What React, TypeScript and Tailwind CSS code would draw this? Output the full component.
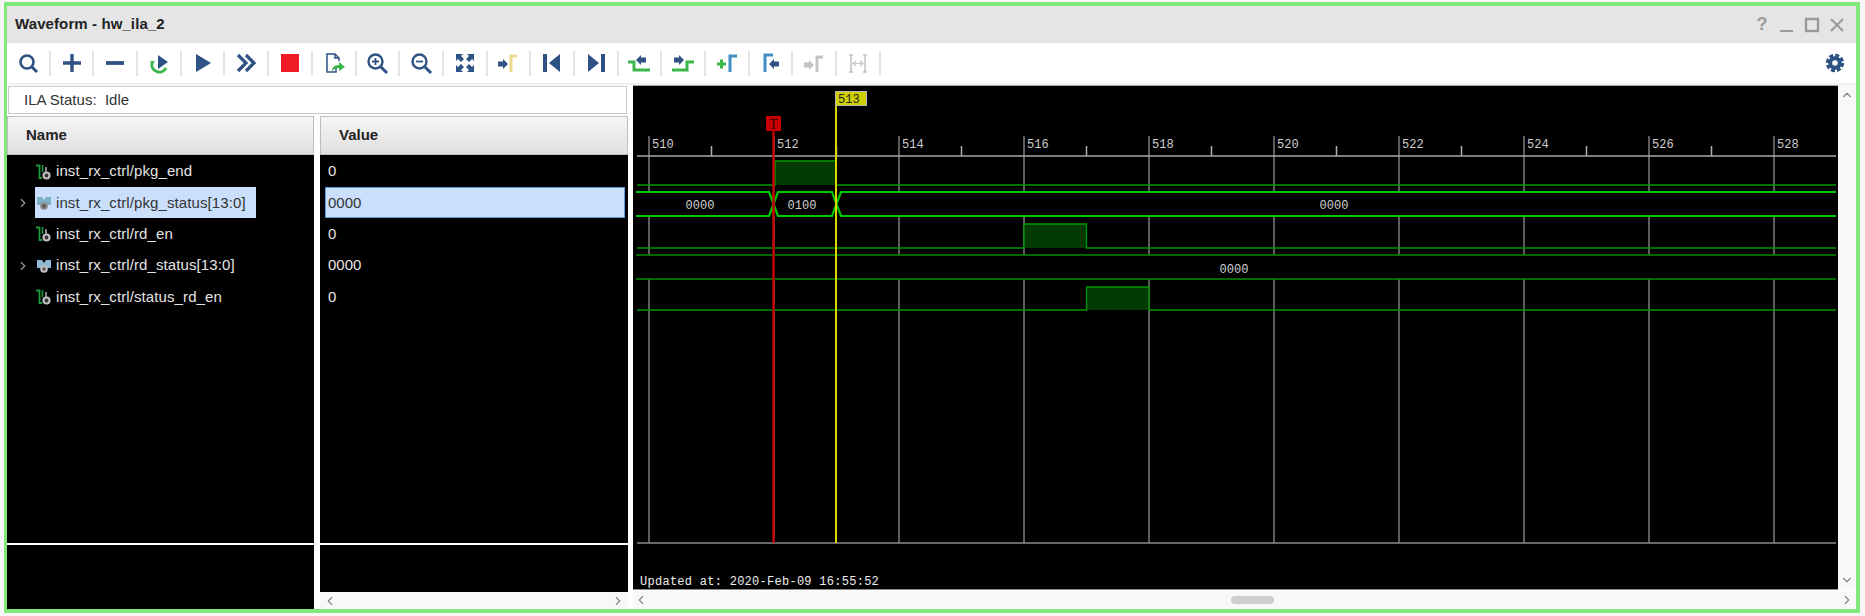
import { ChevronDown, ChevronLeft, ChevronRight, ChevronUp } from 'lucide-react';
import type { ReactNode } from 'react';

const NAVY = '#2f5285';
const GREEN = '#3cb54a';
const BLUE = '#3f8fc4';
const GRAY = '#c4c4c4';

function Ico({ children }: { children: ReactNode }) {
  return (
    <svg viewBox="0 0 24 24" className="h-6 w-6" fill="none">
      {children}
    </svg>
  );
}

const Arrow = ({ x, y, color, left }: { x: number; y: number; color: string; left?: boolean }) => (
  <path
    d={
      left
        ? `M${x} ${y}l5 -5v2.5h5v5h-5v2.5z`
        : `M${x} ${y - 2.5}h5v-2.5l5 5l-5 5v-2.5h-5z`
    }
    fill={color}
  />
);

const toolbarIcons: ReactNode[] = [
  <Ico>
    <circle cx="11" cy="11" r="6.5" stroke={NAVY} strokeWidth="2.6" />
    <path d="M16 16l5 5" stroke={NAVY} strokeWidth="3" />
  </Ico>,
  <Ico>
    <path d="M12 3v18M3 12h18" stroke={NAVY} strokeWidth="3.4" />
  </Ico>,
  <Ico>
    <path d="M3 12h18" stroke={NAVY} strokeWidth="3.8" />
  </Ico>,
  <Ico>
    <path d="M5 12a7.5 7.5 0 0 0 14 5" stroke={GREEN} strokeWidth="3" />
    <path d="M3 10h5l-2.500 4z" fill={GREEN} />
    <path d="M11 4l10 7l-10 7z" fill={NAVY} />
  </Ico>,
  <Ico>
    <path d="M5 3l15 9l-15 9z" fill={NAVY} />
  </Ico>,
  <Ico>
    <path d="M4 4l8 8l-8 8M12 4l8 8l-8 8" stroke={NAVY} strokeWidth="3.2" />
  </Ico>,
  <svg viewBox="0 0 24 24" className="h-6 w-6">
    <rect x="3" y="3" width="18" height="18" fill="#ee1c25" />
  </svg>,
  <Ico>
    <path d="M14 16v5H5V3h8l4 4v3M13 3v4h4" stroke={NAVY} strokeWidth="1.5" />
    <path d="M10 20c0-4 3-6 7-6v-3l6 5l-6 4v-3c-3 0-5 1-7 3z" fill={GREEN} />
  </Ico>,
  <Ico>
    <circle cx="10.500" cy="10.500" r="7" stroke={NAVY} strokeWidth="2.4" />
    <path d="M16 16l6 6" stroke={NAVY} strokeWidth="3" />
    <path d="M10.500 7v7M7 10.500h7" stroke={NAVY} strokeWidth="1.8" />
  </Ico>,
  <Ico>
    <circle cx="10.500" cy="10.500" r="7" stroke={NAVY} strokeWidth="2.4" />
    <path d="M16 16l6 6" stroke={NAVY} strokeWidth="3" />
    <path d="M7 10.500h7" stroke={NAVY} strokeWidth="1.8" />
  </Ico>,
  <Ico>
    <path
      d="M3 3h7l-2 2l3 3l-3 3l-3-3l-2 2zM21 3v7l-2-2l-3 3l-3-3l3-3l-2-2zM3 21v-7l2 2l3-3l3 3l-3 3l2 2zM21 21h-7l2-2l-3-3l3-3l3 3l2-2z"
      fill={NAVY}
    />
  </Ico>,
  <Ico>
    <Arrow x={2} y={13} color={NAVY} />
    <path d="M15 21V5h6" stroke="#ecd98a" strokeWidth="3" />
  </Ico>,
  <Ico>
    <path d="M5 3v18" stroke={NAVY} strokeWidth="4" />
    <path d="M20 3v18l-11-9z" fill={NAVY} />
  </Ico>,
  <Ico>
    <path d="M19 3v18" stroke={NAVY} strokeWidth="4" />
    <path d="M4 3v18l11-9z" fill={NAVY} />
  </Ico>,
  <Ico>
    <path d="M1 11h6v8h16" stroke={GREEN} strokeWidth="3" />
    <Arrow x={9} y={9} color={NAVY} left />
  </Ico>,
  <Ico>
    <path d="M1 19h15v-8h7" stroke={GREEN} strokeWidth="3" />
    <Arrow x={3} y={9} color={NAVY} />
  </Ico>,
  <Ico>
    <path d="M2 13h9M6.500 8.500v9" stroke={GREEN} strokeWidth="3" />
    <path d="M15 21V5h7" stroke={BLUE} strokeWidth="3" />
  </Ico>,
  <Ico>
    <path d="M6 21V4h8" stroke={BLUE} strokeWidth="3" />
    <Arrow x={10} y={13} color={NAVY} left />
  </Ico>,
  <Ico>
    <Arrow x={2} y={14} color={GRAY} />
    <path d="M15 21V6h6" stroke={GRAY} strokeWidth="3" />
  </Ico>,
  <Ico>
    <path d="M5 4v17h0M19 4v17M3 4h4M3 21h4M17 4h4M17 21h4" stroke={GRAY} strokeWidth="1.6" />
    <path d="M7 12.500h10M10 10l-3 2.500l3 2.500M14 10l3 2.500l-3 2.500" stroke={GRAY} strokeWidth="1.2" />
  </Ico>,
];

function Gear() {
  return (
    <svg viewBox="0 0 20 20" className="h-5 w-5" fill="none">
      <circle cx="10" cy="10" r="7.500" stroke={NAVY} strokeWidth="3.400" strokeDasharray="3.890 1.999" />
      <circle cx="10" cy="10" r="6.800" fill={NAVY} />
      <circle cx="10" cy="10" r="2.800" fill="#fff" />
    </svg>
  );
}

function ScalarIcon() {
  return (
    <svg viewBox="0 0 16 16" className="h-4 w-4 shrink-0" fill="none">
      <path d="M0 1.500h3.500V14H6" stroke="#1f9a3c" strokeWidth="1.800" />
      <path d="M6.500 1v7" stroke="#1f9a3c" strokeWidth="1.500" />
      <circle cx="10.500" cy="11.500" r="3" stroke="#bdbdbd" strokeWidth="2.200" fill="#333" />
      <path d="M10 3v5" stroke="#bdbdbd" strokeWidth="1.400" />
    </svg>
  );
}

function BusIcon({ selected }: { selected?: boolean }) {
  return (
    <svg viewBox="0 0 16 16" className="h-4 w-4 shrink-0" fill="none">
      <path d="M1 2h5l2 3l2-3h5v8h-4l-3-2l-3 2H1z" fill={selected ? '#7fb0c8' : '#8fb8d4'} />
      <circle cx="8" cy="11" r="2.800" stroke={selected ? '#8a8a8a' : '#c0c0c0'} strokeWidth="2" fill="#555" />
    </svg>
  );
}

const signals = [
  { name: 'inst_rx_ctrl/pkg_end', value: '0' },
  { name: 'inst_rx_ctrl/pkg_status[13:0]', value: '0000', bus: true, selected: true },
  { name: 'inst_rx_ctrl/rd_en', value: '0' },
  { name: 'inst_rx_ctrl/rd_status[13:0]', value: '0000', bus: true },
  { name: 'inst_rx_ctrl/status_rd_en', value: '0' },
];

const majorTicks = [510, 512, 514, 516, 518, 520, 522, 524, 526, 528];
const X0 = 649;

function Wave() {
  const monoFont = { fontFamily: '"Liberation Mono", monospace' };
  return (
    <svg viewBox="633 85 1205 505" className="block h-full w-full" style={monoFont}>
      <path d="M633 85.500H1838" stroke="#a8a8a8" />
      <path d="M633 589.500H1838" stroke="#8a8a8a" />
      {/* ruler */}
      {majorTicks.map((t, i) => {
        const x = X0 + i * 125;
        return (
          <g key={t}>
            <path d={`M${x} 136V543`} stroke="#7d7d7d" strokeWidth="1.500" />
            <text x={x + 3} y="148" fill="#cfcfcf" fontSize="12">
              {t}
            </text>
            {i < 9 && <path d={`M${x + 62.5} 146V156`} stroke="#b0b0b0" strokeWidth="1.500" />}
          </g>
        );
      })}
      <path d="M637 156H1836" stroke="#a8a8a8" strokeWidth="1.500" />
      <path d="M637 543H1836" stroke="#8a8a8a" strokeWidth="1.500" />

      {/* pkg_end */}
      <rect x="775" y="161" width="61" height="24" fill="#033a03" />
      <path d="M637 185H775V161H836V185H1836" stroke="#009800" strokeWidth="1.300" fill="none" />

      {/* pkg_status, selected */}
      <rect x="636" y="192" width="1200" height="24" fill="#000" />
      <path
        d="M636 192H769L778 216H832L841 192H1836M636 216H769L778 192H832L841 216H1836"
        stroke="#00c800"
        strokeWidth="2.200"
        fill="none"
      />
      <text x="700" y="209" fill="#d0d0d0" fontSize="12" textAnchor="middle">0000</text>
      <text x="802" y="209" fill="#d0d0d0" fontSize="12" textAnchor="middle">0100</text>
      <text x="1334" y="209" fill="#d0d0d0" fontSize="12" textAnchor="middle">0000</text>

      {/* rd_en */}
      <rect x="1024" y="224" width="62.500" height="24" fill="#033a03" />
      <path d="M637 248H1024V224H1086.500V248H1836" stroke="#009800" strokeWidth="1.300" fill="none" />

      {/* rd_status */}
      <rect x="636" y="255" width="1200" height="24" fill="#000" />
      <path d="M636 255H1836M636 279H1836" stroke="#008c00" strokeWidth="1.500" fill="none" />
      <text x="1234" y="273" fill="#d0d0d0" fontSize="12" textAnchor="middle">0000</text>

      {/* status_rd_en */}
      <rect x="1086.500" y="287" width="62.500" height="23" fill="#033a03" />
      <path d="M637 310H1086.500V287H1149V310H1836" stroke="#009800" strokeWidth="1.300" fill="none" />

      {/* markers */}
      <path d="M773.500 130V543" stroke="#c00000" strokeWidth="2.500" />
      <rect x="766" y="116" width="15" height="15" fill="#c80000" />
      <text x="773.500" y="129" fill="#300000" fontSize="14" textAnchor="middle" fontFamily='"Liberation Serif", serif'>
        T
      </text>
      <path d="M836 104V543" stroke="#d8d800" strokeWidth="2" />
      <rect x="835.500" y="91.500" width="31" height="14" fill="#cfcf00" stroke="#b8b8b8" />
      <text x="838" y="103" fill="#222" fontSize="12">513</text>

      <text x="640" y="585" fill="#eeeeee" fontSize="12" letterSpacing="0.270">
        Updated at: 2020-Feb-09 16:55:52
      </text>
    </svg>
  );
}

export default function App() {
  return (
    <div className="h-[616px] w-[1865px] bg-[#f6f6f6] pl-1 pt-[2px] font-['Liberation_Sans',sans-serif]">
      <div className="h-[611px] w-[1856px] border-[4px] border-l-[3px] border-[#7fe87a] bg-white">
        {/* title bar */}
        <div className="flex h-[37px] items-center justify-between bg-[#e5e5e5] pl-2 pr-[11px]">
          <span className="text-[15px] font-bold tracking-[0.100px] text-[#222]">Waveform - hw_ila_2</span>
          <div className="flex items-center gap-[9px] text-[#9a9a9a]">
            <span className="w-4 text-center text-[18px] font-bold">?</span>
            <svg viewBox="0 0 16 16" className="h-4 w-4" fill="none" stroke="currentColor" strokeWidth="2">
              <path d="M1 14h13" />
            </svg>
            <svg viewBox="0 0 16 16" className="h-4 w-4" fill="none" stroke="currentColor" strokeWidth="2.400">
              <rect x="2" y="2" width="12" height="12" />
            </svg>
            <svg viewBox="0 0 16 16" className="h-4 w-4" fill="none" stroke="currentColor" strokeWidth="2">
              <path d="M2 2l12 12M14 2L2 14" />
            </svg>
          </div>
        </div>

        {/* toolbar */}
        <div className="flex h-[42px] items-start justify-between border-b-2 border-[#f0f0f0] pr-[11px] pt-2">
          <div className="flex">
            {toolbarIcons.map((icon, i) => (
              <div key={i} className="flex h-[25px] w-[43.700px] items-center justify-center border-r-2 border-[#e4e4e4] pb-px">
                {icon}
              </div>
            ))}
          </div>
          <div className="mt-[2px]">
            <Gear />
          </div>
        </div>

        {/* main */}
        <div className="flex h-[524px]">
          <div className="w-[621px] pt-px">
            <div className="ml-px flex h-[28px] w-[619px] items-center border border-[#c8c8c8] pl-[15px] pt-px text-[15px] text-[#333]">
              ILA Status:&nbsp; Idle
            </div>
            <div className="mt-[2px] flex gap-[6px]">
              <div className="flex h-[39px] w-[307px] items-center border border-[#bdbdbd] bg-gradient-to-b from-[#f6f6f6] to-[#e0e0e0] pl-[18px] text-[15px] font-bold text-[#222]">
                Name
              </div>
              <div className="flex h-[39px] w-[308px] items-center border border-[#bdbdbd] bg-gradient-to-b from-[#f6f6f6] to-[#e0e0e0] pl-[18px] text-[15px] font-bold text-[#222]">
                Value
              </div>
            </div>
            <div className="flex h-[454px] gap-[6px]">
              {/* name column */}
              <div className="flex w-[307px] flex-col">
                <div className="h-[388px] bg-black pt-px">
                  {signals.map((s) => (
                    <div key={s.name} className="flex h-[31.300px] items-center text-[15px] tracking-[0.100px]">
                      <span className="flex w-[28px] justify-end pr-[5px]">
                        {s.bus && <ChevronRight size={14} color="#9a9a9a" />}
                      </span>
                      <div
                        className={`flex h-[31px] flex-1 items-center gap-[4px] pl-[1px] ${
                          s.selected ? 'mr-[58px] bg-[#c9dffc] text-[#333]' : 'text-[#e4e4e4]'
                        }`}
                      >
                        {s.bus ? <BusIcon selected={s.selected} /> : <ScalarIcon />}
                        <span>{s.name}</span>
                      </div>
                    </div>
                  ))}
                </div>
                <div className="mt-[2px] flex-1 bg-black" />
              </div>

              {/* value column */}
              <div className="flex w-[308px] flex-col">
                <div className="h-[388px] bg-black pt-px">
                  {signals.map((s) => (
                    <div key={s.name} className="flex h-[31.300px] items-center text-[15px]">
                      {s.selected ? (
                        <div className="ml-[5px] flex h-[31px] w-[300px] items-center border border-[#5a9bd8] bg-[#c9dffc] pl-[2px] text-[#333]">
                          {s.value}
                        </div>
                      ) : (
                        <span className="pl-2 text-[#e4e4e4]">{s.value}</span>
                      )}
                    </div>
                  ))}
                </div>
                <div className="mt-[2px] h-[47px] bg-black" />
                <div className="flex flex-1 items-center justify-between bg-[#f8f8f8] px-[3px] text-[#888]">
                  <ChevronLeft size={14} />
                  <ChevronRight size={14} />
                </div>
              </div>
            </div>
          </div>

          {/* waveform */}
          <div className="ml-[5px] flex w-[1223px] flex-col">
            <div className="flex h-[505px]">
              <div className="w-[1205px] bg-black">
                <Wave />
              </div>
              <div className="flex flex-1 flex-col items-center justify-between bg-[#f8f8f8] py-[3px] text-[#888]">
                <ChevronUp size={14} />
                <ChevronDown size={14} />
              </div>
            </div>
            <div className="mt-px flex flex-1 items-center bg-[#f8f8f8] px-[1px] text-[#888]">
              <ChevronLeft size={14} />
              <div className="ml-[583px] h-[8px] w-[43px] rounded-full bg-[#cdcdcd]" />
              <ChevronRight size={14} className="ml-auto mr-[1px]" />
            </div>
          </div>
        </div>
      </div>
    </div>
  );
}
